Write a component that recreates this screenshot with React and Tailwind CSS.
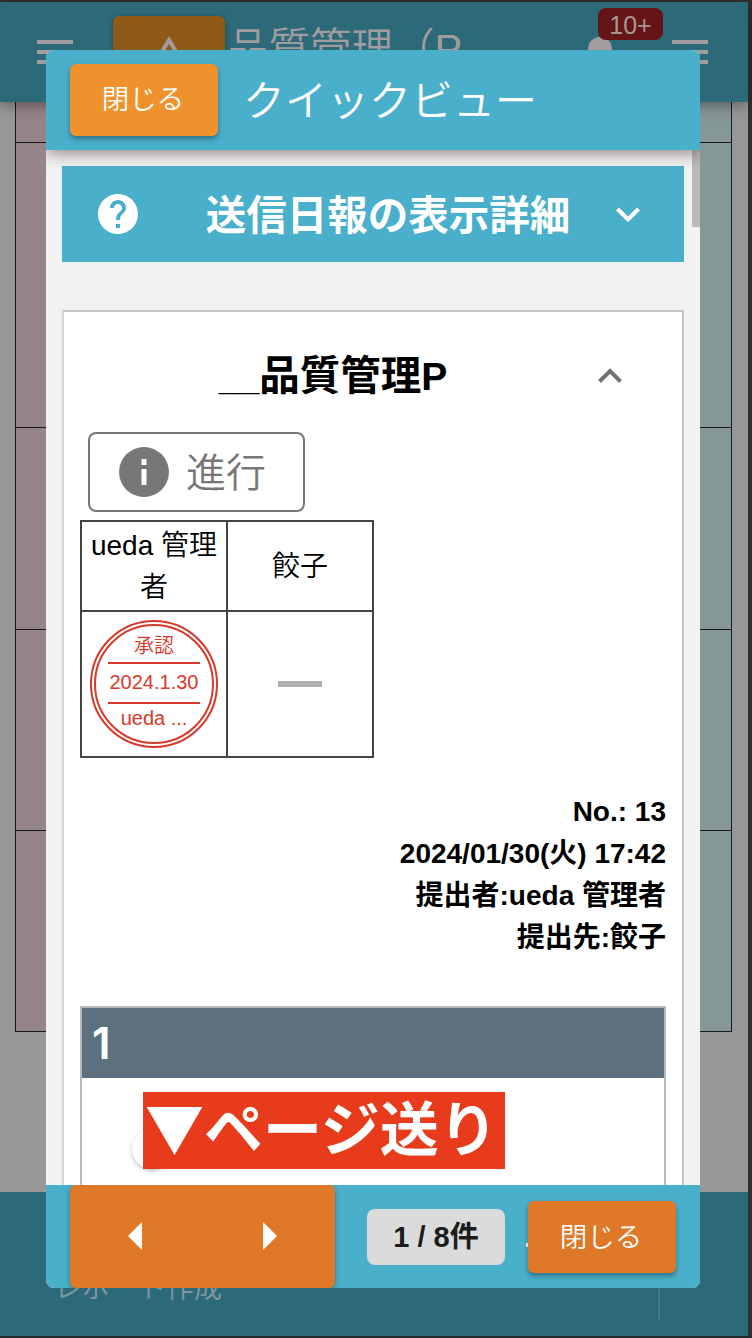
import React from "react";

const jp = "font-['Liberation_Sans','Noto_Sans_CJK_JP',sans-serif]";

function Bars() {
  return (
    <div className="flex w-9 flex-col gap-[6px]">
      <div className="h-1 bg-[#a09c9f]" />
      <div className="h-1 bg-[#a09c9f]" />
      <div className="h-1 bg-[#a09c9f]" />
    </div>
  );
}

function TableRow({ height }) {
  return (
    <div className={`flex justify-between border-b border-[#161a1b] ${height}`}>
      <div className="w-40 bg-[#958588]" />
      <div className="w-40 bg-[#869798]" />
    </div>
  );
}

function BackgroundPage() {
  return (
    <div className="flex h-[1338px] w-[752px] flex-col border-t-2 border-r-4 border-b-2 border-t-[#352e2f] border-r-[#303030] border-b-[#25292d] bg-[#989898]">
      <header className="relative flex h-[100px] shrink-0 bg-[#2d6a79] pl-[37px] shadow-[0_3px_14px_rgba(0,0,0,0.4)]">
        <div className="pt-[38px]">
          <Bars />
        </div>
        <div className="mt-[14px] ml-10 flex h-16 w-28 justify-center rounded-md bg-[#8f5918] pt-[20px] shadow-[0_1px_5px_rgba(0,0,0,0.35)]">
          <svg className="h-8 w-10" viewBox="0 0 40 32" fill="none" stroke="#a09c9f" strokeWidth="4">
            <path d="M5 29 20 4l15 25" />
          </svg>
        </div>
        <div className="ml-[2px] w-[332px] pt-[17px] text-[41.5px] leading-[60px] font-[350] whitespace-nowrap text-[#a09c9f]">
          品質管理（P
        </div>
        <div className="relative mt-[35px] ml-[29px] h-10 w-6 rounded-t-full bg-[#a09c9f]">
          <div className="absolute -top-[29px] left-[10px] flex h-8 w-[65px] items-center justify-center rounded-lg bg-[#651516] pt-[3px] text-[25px] text-[#a69795]">
            10+
          </div>
        </div>
        <div className="ml-[60px] pt-[38px]">
          <Bars />
        </div>
      </header>
      <div className="ml-[15px] w-[717px] border-x border-[#161a1b]">
        <TableRow height="h-[41px]" />
        <TableRow height="h-[285px]" />
        <TableRow height="h-[202px]" />
        <TableRow height="h-[201px]" />
        <TableRow height="h-[201px]" />
      </div>
      <footer className="mt-auto flex h-[144px] items-end justify-between bg-[#2d6a79] pr-[88px] pl-[54px] text-[28px] font-[350] text-[#7f979f]">
        <span className="pb-[27px] leading-[40px]">レポート作成</span>
        <span className="mb-4 h-24 w-[2px] bg-[#407987]" />
      </footer>
    </div>
  );
}

function StampTable() {
  return (
    <table className="mt-2 w-[294px] table-fixed border-collapse text-center text-[28px] leading-[42px] font-[350]">
      <tbody>
        <tr className="h-[90px]">
          <td className="border-2 border-[#444] p-0 pt-[2px]">ueda 管理者</td>
          <td className="border-2 border-[#444] p-0 pt-[2px]">餃子</td>
        </tr>
        <tr className="h-[146px]">
          <td className="border-2 border-[#444] p-0">
            <div className="mx-auto h-32 w-32 rounded-full border-2 border-[#d8392b] p-[2px]">
              <div className="flex h-full flex-col items-center rounded-full border-2 border-[#d8392b] text-[20px] leading-[40px] text-[#d8392b]">
                <div className="h-[36px]">承認</div>
                <div className="h-[42px] w-[92px] border-y-2 border-[#d8392b] leading-[36px]">2024.1.30</div>
                <div className="leading-[28px]">ueda ...</div>
              </div>
            </div>
          </td>
          <td className="border-2 border-[#444] p-0">
            <div className="mx-auto h-[6px] w-11 bg-[#b0b0b0]" />
          </td>
        </tr>
      </tbody>
    </table>
  );
}

function ReportCard() {
  return (
    <section className="mt-12 border-2 border-[#c4c5c7] border-l-[#d3d5d6] bg-white px-4">
      <div className="flex h-[120px] items-center pt-[7px]">
        <h2 className="w-[506px] pt-[3px] text-center text-[40.5px] leading-[60px] font-bold">
          <span className="text-[36.5px]">__</span>品質管理<span className="text-[39px]">P</span>
        </h2>
        <svg className="ml-3 h-6 w-6" viewBox="0 0 24 24" fill="none" stroke="#727272" strokeWidth="4">
          <path d="M1.5 17.5 12 7l10.5 10.5" />
        </svg>
      </div>
      <button className="ml-2 flex h-20 w-[217px] items-center rounded-lg border-2 border-[#777] pl-[29px] text-[40px] font-[350] text-[#777]">
        <svg className="mr-[17px] h-[50px] w-[50px]" viewBox="0 0 50 50">
          <circle cx="25" cy="25" r="25" fill="#777" />
          <path fill="#fff" d="M22.5 12h5v6h-5zM22.5 22h5v16h-5z" />
        </svg>
        <span className="pt-[2px]">進行</span>
      </button>
      <StampTable />
      <div className="mt-[33px] text-right text-[28px] leading-[42px] font-bold">
        <p>No.: 13</p>
        <p>2024/01/30(火) 17:42</p>
        <p>提出者:ueda 管理者</p>
        <p>提出先:餃子</p>
      </div>
      <div className="mt-[47px] h-[300px] w-[586px] border-2 border-[#b7babd]">
        <div className="h-[70px] bg-[#5c717d] pl-[10px] text-[44px] leading-[71px] font-semibold text-white">
          <span className="font-['Inter',sans-serif]">1</span>
        </div>
        <div className="flex pl-[50px]">
          <div className="relative mt-[51px] h-[40px] w-[40px] rounded-full shadow-[0_2px_4px_rgba(0,0,0,0.25)]">
            <div className="absolute -top-[37px] left-[11px] h-[77px] w-[362px] bg-[#e83b1b] pl-[2px] font-['Noto_Sans_CJK_JP',sans-serif] text-[59px] leading-[67px] font-bold whitespace-nowrap text-white">
              ▼ページ送り
            </div>
          </div>
        </div>
      </div>
    </section>
  );
}

function QuickView() {
  return (
    <div className="absolute top-[50px] left-[46px] flex h-[1238px] w-[654px] flex-col overflow-hidden rounded-lg bg-[#f2f2f2]">
      <header className="relative z-10 flex h-[100px] shrink-0 items-center bg-[#4aafcb] pl-6 text-white shadow-[0_4px_14px_rgba(60,40,40,0.5)]">
        <button className="h-[72px] w-[148px] rounded-md bg-[#ef922d] pr-[2px] text-[27.5px] font-[350] shadow-[0_3px_5px_rgba(0,0,0,0.35)]">
          閉じる
        </button>
        <h1 className="ml-[25px] pt-[3px] text-[42px] leading-[60px] font-[350]">クイックビュー</h1>
      </header>
      <main className="relative min-h-0 flex-1 overflow-hidden px-4 pt-4">
        <div className="absolute top-0 right-0 h-[77px] w-2 bg-[#bbb8ba]" />
        <div className="flex h-24 items-center bg-[#4aafcb] pl-9 text-white">
          <svg className="h-10 w-10" viewBox="2 2 20 20" fill="currentColor">
            <path d="M12 2C6.48 2 2 6.48 2 12s4.48 10 10 10 10-4.48 10-10S17.52 2 12 2zm1 17h-2v-2h2v2zm2.07-7.75-.9.92C13.45 12.9 13 13.5 13 15h-2v-.5c0-1.1.45-2.1 1.17-2.83l1.24-1.26c.37-.36.59-.86.59-1.41 0-1.1-.9-2-2-2s-2 .9-2 2H8c0-2.21 1.79-4 4-4s4 1.79 4 4c0 .88-.36 1.68-.93 2.25z" />
          </svg>
          <h2 className="w-[500px] pt-[4px] text-center text-[40.5px] leading-[60px] font-bold">
            送信日報の表示詳細
          </h2>
          <svg className="-ml-[22px] h-6 w-6" viewBox="0 0 24 24" fill="none" stroke="currentColor" strokeWidth="4">
            <path d="M1.5 7 12 17.5 22.5 7" />
          </svg>
        </div>
        <ReportCard />
      </main>
      <footer className="flex h-[103px] shrink-0 items-center bg-[#4aafcb] pl-6">
        <div className="flex h-full w-[265px] items-center justify-between rounded-md bg-[#df7827] px-[58px] pb-[2px] shadow-[0_2px_5px_rgba(0,0,0,0.35)]">
          <svg className="h-7 w-[14px]" viewBox="0 0 14 28" fill="#fff">
            <path d="M14 0v28L0 14z" />
          </svg>
          <svg className="h-7 w-[14px]" viewBox="0 0 14 28" fill="#fff">
            <path d="M0 0v28l14-14z" />
          </svg>
        </div>
        <div className="ml-8 flex h-14 w-[138px] items-center justify-center rounded-lg bg-[#dbdbdb] pt-[3px] text-[29px] font-bold text-[#1c1c1c]">
          1 / 8件
        </div>
        <div className="mt-[17px] ml-[21px] h-1 w-[2px] bg-white" />
        <button className="h-[72px] w-[148px] rounded-md bg-[#df7827] pt-[2px] pr-[2px] text-[27.5px] font-[350] text-white shadow-[0_3px_5px_rgba(0,0,0,0.35)]">
          閉じる
        </button>
      </footer>
    </div>
  );
}

export default function App() {
  return (
    <div lang="ja" className={`relative h-[1338px] w-[752px] overflow-hidden text-black ${jp}`}>
      <BackgroundPage />
      <QuickView />
    </div>
  );
}
